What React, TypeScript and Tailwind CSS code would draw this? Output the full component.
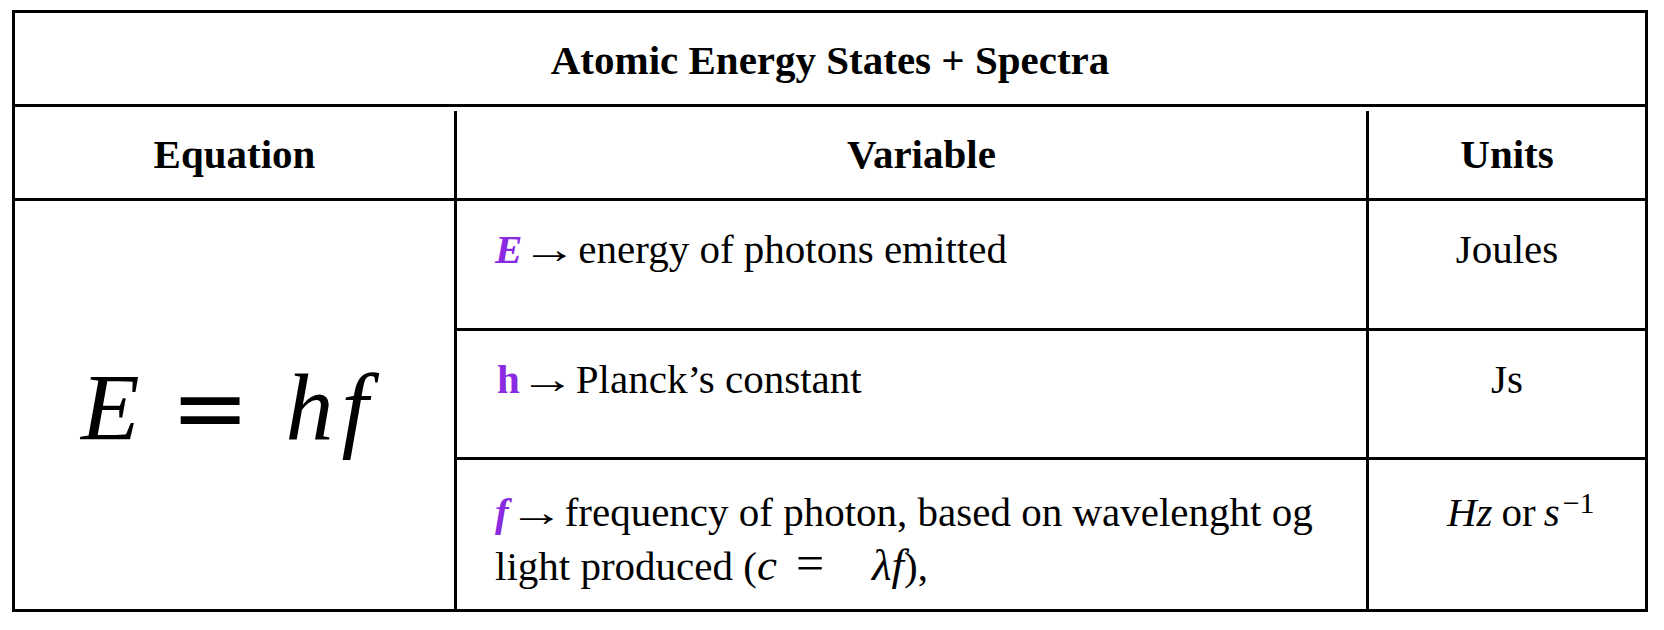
const purple = "font-bold text-[#8a2be2]";

// Liberation's arrow is short; stretch it to the long arrow of the reference
const Arrow = () => (
  <span className="mr-[15px] inline-block origin-left scale-x-[1.35]">→</span>
);

export default function App() {
  return (
    <div className="min-h-[630px] bg-white pl-[12px] pt-[10px] font-['Liberation_Serif',serif] text-[41px] text-black">
      <div className="w-[1636px] border-[3px] border-black">
        {/* title */}
        <div className="flex h-[91px] items-center justify-center pt-[4px] font-bold">
          Atomic Energy States + Spectra
        </div>

        {/* column headers */}
        <div className="grid h-[94px] grid-cols-[439px_912px_279px] border-t-[3px] border-black pt-[4px] font-bold">
          <div className="flex items-center justify-center">Equation</div>
          <div className="flex items-center justify-center border-l-[3px] border-black pl-[20px]">
            Variable
          </div>
          <div className="flex items-center justify-center border-l-[3px] border-black">
            Units
          </div>
        </div>

        {/* body */}
        <div className="grid grid-cols-[439px_912px_279px] grid-rows-[127px_129px_152px] border-t-[3px] border-black leading-[51px]">
          <div className="row-span-3 flex items-center pl-[66px] pt-[6px] text-[96px] leading-none">
            <span className="italic">E</span>
            <span className="ml-[31px] mr-[36px] font-['DejaVu_Sans',sans-serif] text-[94px]">=</span>
            <span className="italic">h</span>
            <span className="ml-[8px] italic">f</span>
          </div>

          <div className="border-l-[3px] border-black pl-[38px] pt-[23px]">
            <span className={`${purple} italic`}>E</span>
            <Arrow />energy of photons emitted
          </div>
          <div className="border-l-[3px] border-black pt-[23px] text-center">Joules</div>

          <div className="border-l-[3px] border-t-[3px] border-black pl-[40px] pt-[23px]">
            <span className={purple}>h</span>
            <Arrow />Planck’s constant
          </div>
          <div className="border-l-[3px] border-t-[3px] border-black pt-[23px] text-center">Js</div>

          <div className="border-l-[3px] border-t-[3px] border-black pl-[38px] pt-[27px]">
            <span className={`${purple} italic`}>f</span>
            <Arrow />frequency of photon, based on wavelenght og
            <br />
            light produced (<span className="text-[45px] italic">c</span>
            <span className="ml-[19px] mr-[48px] text-[50px]">=</span>
            <span className="text-[45px] italic">λf</span>),
          </div>
          <div className="border-l-[3px] border-t-[3px] border-black pl-[78px] pt-[27px]">
            <span className="italic">Hz</span>
            <span className="ml-[9px]">or</span>
            <span className="ml-[8px] italic">s</span>
            <span className="relative top-[-13px] ml-[3px] text-[30px]">−1</span>
          </div>
        </div>
      </div>
    </div>
  );
}
